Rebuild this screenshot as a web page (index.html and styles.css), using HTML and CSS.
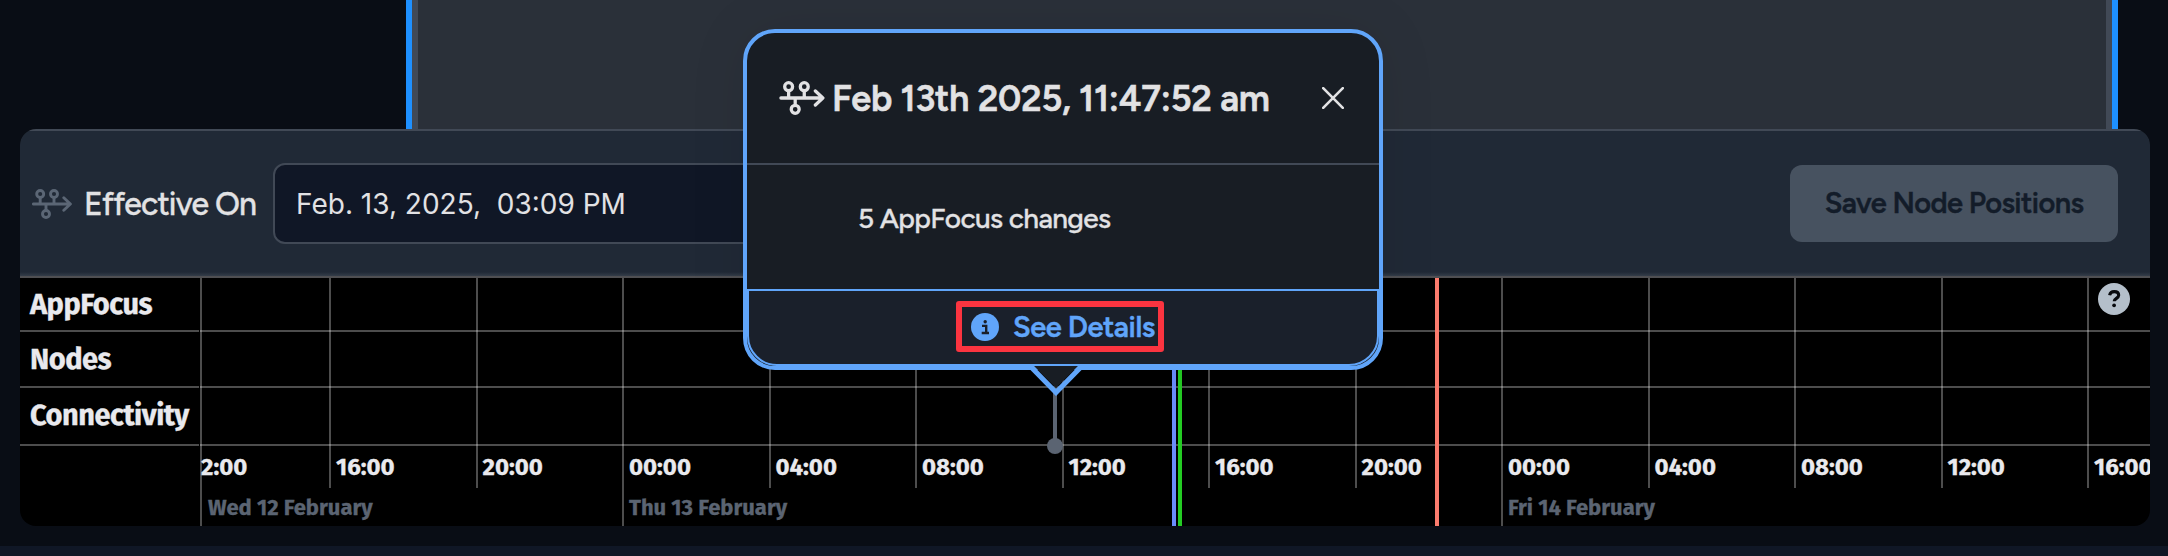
FILE: index.html
```html
<!DOCTYPE html>
<html lang="en">
<head>
<meta charset="utf-8">
<title>Timeline</title>
<link rel="stylesheet" href="styles.css">
</head>
<body>
<svg width="0" height="0" class="defs"><symbol id="flow" viewBox="0 0 40 30"><g fill="none" stroke="currentColor" stroke-width="2.9" stroke-linecap="round" stroke-linejoin="round"><path d="M1.400 15H38M31.800 8.800 38.400 15l-6.600 6.200M8.200 8.600V15M22 8.600V15M14 15v6.400"/><circle cx="8.200" cy="5" r="3.500"/><circle cx="22" cy="5" r="3.500"/><circle cx="14" cy="25" r="3.500"/></g></symbol></svg>
<main class="app">
  <div class="canvas"><div class="group"><div class="group-inner"></div></div></div>
  <section class="panel">
    <header class="toolbar">
      <svg class="flow-icon"><use href="#flow"/></svg>
      <label class="label">Effective On</label>
      <div class="field">Feb. 13, 2025,&nbsp; 03:09 PM</div>
      <button class="save">Save Node Positions</button>
    </header>
    <div class="timeline">
      <div class="groups">
        <div class="row">AppFocus</div>
        <div class="row">Nodes</div>
        <div class="row tall">Connectivity</div>
      </div>
      <div class="grid">
        <div class="lanes"><div class="lane"></div><div class="lane"></div><div class="lane tall"></div></div>
        <div class="ticks">
          <div class="tick first major"><span class="time">2:00</span><span class="date">Wed 12 February</span></div>
          <div class="tick"><span class="time">16:00</span></div>
          <div class="tick"><span class="time">20:00</span></div>
          <div class="tick major"><span class="time">00:00</span><span class="date">Thu 13 February</span></div>
          <div class="tick"><span class="time">04:00</span></div>
          <div class="tick"><span class="time">08:00</span></div>
          <div class="tick"><span class="time">12:00</span></div>
          <div class="tick"><span class="time">16:00</span></div>
          <div class="tick"><span class="time">20:00</span></div>
          <div class="tick major"><span class="time">00:00</span><span class="date">Fri 14 February</span></div>
          <div class="tick"><span class="time">04:00</span></div>
          <div class="tick"><span class="time">08:00</span></div>
          <div class="tick"><span class="time">12:00</span></div>
          <div class="tick"><span class="time">16:00</span></div>
        </div>
        <i class="marker blue"></i><i class="marker green"></i><i class="marker coral"></i>
        <i class="stem"></i><i class="dot"></i>
        <svg class="help" viewBox="0 0 32 32"><circle cx="16" cy="16" r="16" fill="#b4bfca"/><path d="M11.600 12.200c.5-2.400 2.200-3.600 4.600-3.600 2.700 0 4.500 1.400 4.500 3.700 0 3-4.500 3.100-4.500 6" fill="none" stroke="#080a0e" stroke-width="3.100"/><circle cx="16.100" cy="22.300" r="1.900" fill="#080a0e"/></svg>
      </div>
    </div>
  </section>
</main>
<aside class="popup">
  <div class="popup-head">
    <svg class="flow-icon light"><use href="#flow"/></svg>
    <h2 class="title">Feb 13th 2025, 11:47:52 am</h2>
    <svg class="close" viewBox="0 0 22 22"><path d="M1.200 1.200 20.800 20.800M20.800 1.200 1.200 20.800" stroke="#e2e2e4" stroke-width="2.600" stroke-linecap="round"/></svg>
  </div>
  <div class="popup-body">5 AppFocus changes</div>
  <div class="popup-foot">
    <a class="details"><svg class="info" viewBox="0 0 28 28"><circle cx="14" cy="14" r="14" fill="#60a5fa"/><circle cx="14.200" cy="8.700" r="1.700" fill="#1a202b"/><path d="M11 12.900h4.200v7M10.700 20h7.300" fill="none" stroke="#1a202b" stroke-width="2.400"/></svg><span>See Details</span></a>
  </div>
  <svg class="pointer" viewBox="0 0 52 32"><path d="M4 2h44L26 24z" fill="#181d24"/><path d="M2 4 26 28.500 50 4" fill="none" stroke="#60a5fa" stroke-width="5"/></svg>
</aside>
</body>
</html>
```
FILE: styles.css
```css
* { box-sizing: border-box; }
body { margin: 0; width: 2168px; height: 556px; overflow: hidden; background: #090d15; font-family: Figtree, "Inter", sans-serif; color: #e2e2e4; }
.defs { position: absolute; }
.app { height: 556px; border-bottom: 10px solid #101726; display: flex; flex-direction: column; }
.canvas { height: 129px; padding-left: 406px; }
.group { width: 1712px; height: 129px; border: solid #1e90ff; border-width: 0 6px; }
.group-inner { height: 129px; background: #2a3039; border: solid #414956; border-width: 0 6px; }
.panel { margin: 0 18px 0 20px; height: 397px; border-radius: 16px; overflow: hidden; background: #000; }
.toolbar { height: 147px; display: flex; align-items: center; border-top: 2px solid #414956; background: linear-gradient(#202936 0 141px, #343d49 145px); padding: 0 32px 0 12px; }
.flow-icon { width: 40px; height: 30px; color: #5b6675; flex: none; }
.label { margin-left: 12px; width: 189px; font-size: 32px; font-weight: 500; letter-spacing: -.85px; line-height: 40px; white-space: nowrap; -webkit-text-stroke: .3px; }
.field { width: 800px; height: 81px; border: 2px solid #414956; border-radius: 12px; background: #101726; padding-left: 21px; font: 28px/79px Inter, sans-serif; }
.save { margin-left: auto; width: 328px; height: 77px; border: 0; border-radius: 12px; background: #475260; color: #131c29; font: 600 29px/75px Figtree, Inter, sans-serif; letter-spacing: -.6px; padding: 0 0 2px; white-space: nowrap; -webkit-text-stroke: .4px; }
.timeline { height: 250px; border-top: 2px solid #4f4f52; display: flex; font-family: "Fira Sans", "Noto Sans", sans-serif; font-weight: 700; color: #e9e9ed; }
.groups { width: 179px; }
.row, .lane { height: 55px; border-bottom: 2px solid #4d4d4d; }
.row { height: 54px; padding-left: 10px; font-size: 29px; line-height: 53px; letter-spacing: -.5px; -webkit-text-stroke: .3px; }
.row + .row, .lane + .lane { height: 56px; }
.row + .row { line-height: 56px; }
.row.tall, .row + .row.tall, .lane + .lane.tall { height: 58px; }
.lane:first-child { height: 54px; }
.grid { position: relative; flex: 1; margin-left: 1px; overflow: hidden; }
.lanes { position: absolute; inset: 0; }
.ticks { display: flex; height: 248px; position: relative; }
.tick { flex: none; width: 146.500px; height: 210px; border-left: 2px solid rgba(255,255,255,.3); padding: 169px 0 0 5px; white-space: nowrap; }
.tick.first { width: 129px; }
.first .time { margin-left: -6px; }
.tick.major { height: 248px; }
.time, .date { display: block; font-size: 24px; line-height: 40px; -webkit-text-stroke: .3px; }
.date { color: #5b6472; font-size: 22px; line-height: 42px; }
.first .date { padding-left: 1px; }
.marker { position: absolute; top: 0; width: 4px; height: 248px; }
.blue { left: 972px; background: #6a8dfc; }
.green { left: 978px; background: #24cc24; }
.coral { left: 1235px; background: #fb7b6d; }
.stem { position: absolute; left: 853px; top: 110px; width: 4px; height: 52px; background: #5b6472; }
.dot { position: absolute; left: 847px; top: 160px; width: 16px; height: 16px; border-radius: 50%; background: #5b6472; }
.help { position: absolute; left: 1898px; top: 5px; width: 32px; height: 32px; }
.popup { position: absolute; left: 743px; top: 29px; width: 640px; height: 341px; border: 4px solid #60a5fa; border-radius: 32px; background: #181d24; display: flex; flex-direction: column; box-shadow: 0 0 60px rgba(0,0,0,.08); }
.popup-head { height: 132px; border-bottom: 2px solid #414956; display: flex; align-items: center; padding: 0 35px 0 32px; }
.flow-icon.light { width: 46px; height: 34px; color: #e2e2e4; }
.title { margin: 0 0 0 7px; padding-top: 2px; font: 600 36px/44px Figtree, Inter, sans-serif; letter-spacing: -.2px; white-space: nowrap; -webkit-text-stroke: .6px; }
.close { width: 22px; height: 22px; margin-left: auto; }
.popup-body { height: 124px; padding-left: 111px; font-size: 28px; line-height: 106px; font-weight: 500; letter-spacing: -.62px; -webkit-text-stroke: .3px; }
.popup-foot { height: 77px; border: 2px solid #60a5fa; border-radius: 0 0 30px 30px; background: #1a202b; display: flex; padding: 10px 0 0 207px; }
.details { width: 208px; height: 51px; border: 6px solid #fb3440; border-radius: 3px; display: flex; align-items: center; padding-left: 9px; color: #60a5fa; font-size: 29px; font-weight: 600; letter-spacing: -.45px; white-space: nowrap; -webkit-text-stroke: .4px; }
.info { width: 28px; height: 28px; margin-right: 14px; flex: none; }
.pointer { position: absolute; left: 283px; top: 331px; width: 52px; height: 32px; }
```
